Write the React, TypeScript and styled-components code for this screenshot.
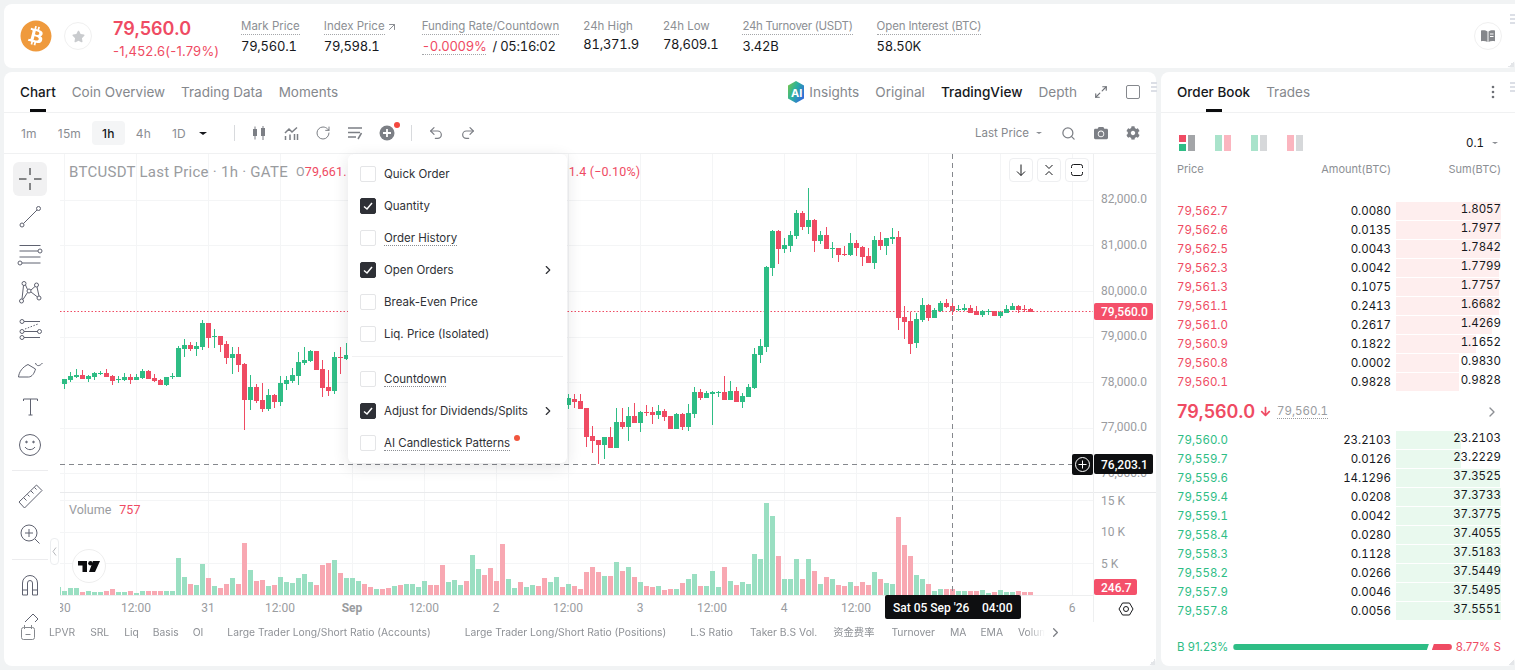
import React from 'react';
import styled, { createGlobalStyle } from 'styled-components';
import { FaBitcoin, FaStar, FaCamera, FaCog, FaArrowDown } from 'react-icons/fa';
import { ArrowUpRight, ChevronRight, Maximize2, Redo2, RotateCw, Search, Undo2 } from 'lucide-react';

const RED = '#ef4b63';
const GREEN = '#2ebd85';

// candles read off the picture: [up?, body top, body bottom, wick top, wick bottom], 3x px
type Candle = [number, number, number, number, number];

const LEFT_CANDLES: Candle[] = [
  [1, 672, 686, 672, 702], [1, 663, 676, 652, 682], [1, 659, 666, 643, 668], [0, 660, 671, 645, 671],
  [1, 663, 672, 660, 680], [1, 654, 666, 651, 674], [1, 653, 655, 648, 660], [0, 654, 665, 643, 665],
  [0, 662, 678, 660, 690], [1, 672, 674, 664, 684], [1, 666, 676, 655, 678], [0, 667, 676, 658, 686],
  [1, 666, 674, 658, 676], [1, 648, 670, 642, 672], [0, 648, 671, 645, 672], [0, 669, 679, 658, 682],
  [0, 675, 690, 672, 690], [1, 666, 690, 665, 692], [1, 663, 665, 655, 672], [1, 579, 666, 572, 666],
  [1, 570, 582, 552, 606], [0, 570, 582, 560, 588], [1, 573, 582, 560, 603], [1, 504, 576, 495, 585],
  [0, 504, 548, 504, 580], [1, 544, 545, 522, 580], [0, 544, 570, 544, 590], [0, 567, 609, 558, 627],
  [1, 597, 609, 575, 656], [0, 597, 630, 575, 650], [0, 627, 735, 625, 825], [1, 696, 735, 660, 765],
  [0, 696, 738, 686, 745], [0, 735, 762, 685, 770], [1, 720, 762, 702, 768], [0, 720, 741, 716, 760],
  [1, 684, 741, 664, 752], [1, 675, 687, 664, 705], [1, 660, 678, 640, 685], [1, 621, 663, 590, 690],
  [1, 615, 624, 576, 630], [1, 588, 618, 585, 620], [0, 588, 644, 588, 645], [0, 642, 699, 615, 725],
  [0, 696, 708, 645, 723], [1, 606, 708, 592, 716], [0, 606, 608, 575, 656], [1, 600, 612, 565, 615],
];

const MID_CANDLES: Candle[] = [
  [1, 745, 765, 732, 778], [0, 746, 755, 732, 775], [0, 752, 776, 732, 776], [0, 775, 860, 775, 890],
  [0, 858, 873, 828, 908], [0, 870, 885, 870, 942], [1, 860, 885, 860, 926], [0, 860, 893, 832, 893],
  [1, 816, 893, 775, 893], [0, 816, 832, 775, 836], [1, 798, 830, 770, 872], [0, 798, 818, 760, 818],
  [1, 786, 818, 782, 845], [0, 785, 788, 766, 798], [0, 785, 795, 772, 822], [1, 783, 795, 766, 808],
  [0, 783, 800, 778, 812], [0, 798, 836, 798, 836], [1, 792, 836, 790, 838], [0, 792, 830, 790, 840],
  [1, 790, 830, 762, 842], [1, 726, 792, 712, 805], [0, 726, 745, 718, 750], [1, 730, 745, 722, 745],
  [1, 726, 732, 722, 825], [1, 726, 728, 722, 740], [0, 726, 750, 678, 750], [1, 722, 750, 692, 750],
  [0, 722, 755, 712, 755], [1, 738, 755, 730, 773],
];

const RIGHT_CANDLES: Candle[] = [
  [1, 711, 740, 703, 742], [1, 612, 715, 595, 717], [1, 588, 614, 568, 638], [1, 350, 590, 348, 605],
  [1, 243, 354, 240, 378], [0, 243, 296, 240, 342], [1, 286, 296, 264, 308], [1, 255, 288, 243, 305],
  [1, 188, 258, 180, 268], [0, 188, 231, 183, 240], [1, 210, 231, 114, 252], [0, 210, 273, 207, 305],
  [1, 255, 273, 243, 282], [0, 255, 297, 232, 297], [1, 294, 296, 276, 324], [0, 294, 315, 294, 336],
  [0, 312, 315, 288, 318], [1, 279, 315, 250, 318], [0, 279, 294, 270, 318], [0, 291, 321, 288, 348],
  [0, 318, 339, 294, 340], [1, 270, 339, 258, 357], [0, 270, 288, 246, 300], [1, 264, 288, 264, 315],
  [1, 261, 267, 234, 282], [0, 261, 504, 243, 540], [0, 501, 516, 468, 567], [0, 513, 582, 486, 612],
  [1, 507, 579, 489, 594], [1, 465, 510, 444, 516], [0, 465, 504, 462, 513], [1, 480, 504, 474, 504],
  [1, 459, 484, 453, 486], [0, 459, 471, 447, 474], [0, 468, 483, 444, 495], [1, 477, 480, 465, 483],
  [1, 475, 480, 462, 483], [0, 475, 488, 465, 489], [0, 484, 495, 468, 495], [1, 484, 495, 480, 500],
  [1, 483, 485, 477, 495], [0, 483, 497, 483, 498], [1, 486, 498, 483, 503], [1, 477, 489, 465, 489],
  [1, 468, 480, 460, 480], [0, 468, 480, 465, 488], [0, 477, 480, 465, 486], [0, 477, 486, 474, 486],
];

// positive = green bar, negative = pink bar
const VOLUMES = [
  4, 7, 7, -3, 4, 3, 3, -4, -6, 3, 3, -4, 2, 4, -4, -4, -4, 4, 4, 37, 18, -11, 10, 31, -17, 9, -7, -11, 17, -11,
  -52, 25, -14, -15, 9, -10, 18, 13, 12, 17, 21, 13, -10, -30, -32, 35, -22, 17,
  17, 14, -11, -8, 6, -6, -7, 9, -10, 11, 11, 8, 14, -10, -10, -30, 13, 15, 10, -14, 40, 26, -20, -27, -14, -51, 16, 7,
  -13, 8, 10, -9, -17, 13, 18, -8, 11, -9, -6, -23, -28, -23, 19, -19, 33, -24, 28, -18, 13, -9, -8, 9, -5, -6, 6,
  -12, 16, 21, -9, 9, 24, 8, -28, 14, -10, 13, 11, 41, 36, 92, 79, -39, 16, 16, 36, -16, 36, -24, 11, -18, 16, -10,
  -9, 13, -9, -13, -10, 23, -16, 12, 11, -78, -50, -39, 20, 16, -11, 4, 6, -6, -6, 4, 4, -4, -4, 5, 2, -3, 5, 3, 3,
  -4, -3, -3,
];

const ASKS: [string, string, string, number][] = [
  ['79,562.7', '0.0080', '1.8057', 105], ['79,562.6', '0.0135', '1.7977', 105], ['79,562.5', '0.0043', '1.7842', 104],
  ['79,562.3', '0.0042', '1.7799', 103], ['79,561.3', '0.1075', '1.7757', 103], ['79,561.1', '0.2413', '1.6682', 103],
  ['79,561.0', '0.2617', '1.4269', 96], ['79,560.9', '0.1822', '1.1652', 80], ['79,560.8', '0.0002', '0.9830', 63],
  ['79,560.1', '0.9828', '0.9828', 63],
];

const BIDS: [string, string, string, number][] = [
  ['79,560.0', '23.2103', '23.2103', 65], ['79,559.7', '0.0126', '23.2229', 65], ['79,559.6', '14.1296', '37.3525', 104],
  ['79,559.4', '0.0208', '37.3733', 105], ['79,559.1', '0.0042', '37.3775', 105], ['79,558.4', '0.0280', '37.4055', 105],
  ['79,558.3', '0.1128', '37.5183', 105], ['79,558.2', '0.0266', '37.5449', 105], ['79,557.9', '0.0046', '37.5495', 105],
  ['79,557.8', '0.0056', '37.5551', 105],
];

const INDICATORS: [string, number][] = [
  ['LPVR', 0], ['SRL', 15], ['Liq', 15], ['Basis', 14], ['OI', 14],
  ['Large Trader Long/Short Ratio (Accounts)', 24], ['Large Trader Long/Short Ratio (Positions)', 34],
  ['L.S Ratio', 24], ['Taker B.S Vol.', 17], ['资金费率', 16], ['Turnover', 17], ['MA', 15], ['EMA', 14], ['Volume', 15],
];

const MENU_TOP: [string, boolean, boolean, boolean][] = [
  ['Quick Order', false, false, false],
  ['Quantity', true, false, false],
  ['Order History', false, true, false],
  ['Open Orders', true, false, true],
  ['Break-Even Price', false, false, false],
  ['Liq. Price (Isolated)', false, false, false],
];

const GlobalStyle = createGlobalStyle`
  html, body { margin: 0; padding: 0; background: #f1f3f4; }
  body { font-family: Inter, "Noto Sans CJK SC", sans-serif; overflow: hidden; }
  * { box-sizing: border-box; }
`;

const Page = styled.div`
  width: 1515px;
  height: 670px;
  padding: 4px 0 4px 4px;
  display: flex;
  flex-direction: column;
  gap: 4px;
`;

const Card = styled.section`
  position: relative;
  background: #fff;
  border-radius: 8px;
`;

const TopCard = styled(Card)`
  height: 64px;
  border-radius: 8px 0 8px 8px;
  display: flex;
  align-items: center;
  padding: 0 13px 0 16px;
`;

const CoinBadge = styled.div`
  width: 32px;
  height: 32px;
  color: #ef9a3d;
  display: flex;
`;

const RoundButton = styled.div`
  width: 28px;
  height: 28px;
  border-radius: 50%;
  border: 1px solid #f0f0f0;
  display: flex;
  align-items: center;
  justify-content: center;
  color: #c9cbce;
`;

const StarButton = styled(RoundButton)`
  margin-left: 12px;
`;

const BookButton = styled(RoundButton)`
  margin-left: auto;
  color: #85878b;
`;

const PriceBlock = styled.div`
  width: 128px;
  margin-left: 21px;
  padding-top: 5px;
  color: ${RED};
`;

const BigPrice = styled.div`
  font-size: 18px;
  font-weight: 600;
  line-height: 24px;
`;

const PriceChange = styled.div`
  font-size: 13px;
  letter-spacing: 0.2px;
  line-height: 20px;
  white-space: nowrap;
`;

const Stats = styled.div`
  display: flex;
  gap: 24px;
  padding-top: 2px;
`;

const Stat = styled.div`
  display: flex;
  flex-direction: column;
  align-items: flex-start;
`;

const StatLabel = styled.div<{ $track?: number }>`
  display: flex;
  align-items: center;
  gap: 1px;
  font-size: 11.5px;
  letter-spacing: ${(p) => p.$track ?? 0}px;
  line-height: 14px;
  color: #8c8f94;
`;

const Dotted = styled.span`
  border-bottom: 1px dotted #a4a6a9;
  padding-bottom: 1px;
`;

const StatValue = styled.div`
  font-size: 13px;
  letter-spacing: -0.25px;
  line-height: 17px;
  margin-top: 3px;
  color: #16181c;
  white-space: nowrap;
  font-variant-numeric: tabular-nums;
`;

const RedValue = styled.span`
  color: ${RED};
  border-bottom: 1px dotted #a4a6a9;
  margin-right: 6px;
`;

const Grip = styled.i`
  position: absolute;
  top: 10px;
  right: -1px;
  width: 6px;
  height: 10px;
  background: repeating-linear-gradient(#dcdfe6 0 2px, transparent 2px 4px);
`;

const Corner = styled.i`
  position: absolute;
  right: 1px;
  bottom: 1px;
  width: 6px;
  height: 6px;
  background: linear-gradient(135deg, transparent 50%, #e4e6e9 50%);
`;

const Main = styled.div`
  flex: 1;
  display: flex;
  gap: 5px;
`;

const ChartCard = styled(Card)`
  width: 1152px;
  flex: none;
  display: flex;
  flex-direction: column;
`;

const BookCard = styled(Card)`
  flex: 1;
  min-width: 0;
  border-radius: 8px 0 8px 8px;
  display: flex;
  flex-direction: column;
`;

const TabBar = styled.div`
  height: 41px;
  flex: none;
  display: flex;
  align-items: center;
  gap: 16px;
  padding: 0 16px;
  border-bottom: 1px solid #f0f1f2;
`;

const Tab = styled.div<{ $active?: boolean }>`
  position: relative;
  font-size: 13.5px;
  line-height: 40px;
  color: ${(p) => (p.$active ? '#16181c' : '#85888d')};
  font-weight: ${(p) => (p.$active ? 500 : 400)};
  ${(p) =>
    p.$active &&
    `&::after {
      content: '';
      position: absolute;
      left: 50%;
      bottom: 0;
      width: 16px;
      height: 3px;
      margin-left: -8px;
      background: #0b0c0e;
    }`}
`;

const Spacer = styled.div`
  flex: 1;
`;

const ViewTab = styled.div<{ $active?: boolean }>`
  font-size: 13.6px;
  color: ${(p) => (p.$active ? '#16181c' : '#85888d')};
  font-weight: ${(p) => (p.$active ? 500 : 400)};
`;

const InsightsTab = styled(ViewTab)`
  display: flex;
  align-items: center;
  gap: 4px;
`;

const TabIcons = styled.div`
  display: flex;
  align-items: center;
  gap: 18px;
  margin-left: 1px;
  color: #6e7177;
`;

const SquareIcon = styled.i`
  width: 14px;
  height: 14px;
  border: 1.5px solid #85888d;
  border-radius: 2px;
`;

const DotsIcon = styled.svg`
  margin-right: 4px;
`;

const Toolbar = styled.div`
  height: 41px;
  flex: none;
  display: flex;
  align-items: center;
  padding: 0 16px 0 7px;
  border-bottom: 1px solid #f0f1f2;
  color: #7c7f85;
`;

const Intervals = styled.div`
  display: flex;
  gap: 1px;
`;

const Interval = styled.div<{ $active?: boolean }>`
  height: 24px;
  padding: 0 10px;
  border-radius: 4px;
  display: flex;
  align-items: center;
  font-size: 12px;
  letter-spacing: 0.2px;
  font-weight: ${(p) => (p.$active ? 500 : 400)};
  color: ${(p) => (p.$active ? '#16181c' : '#8a8d92')};
  background: ${(p) => (p.$active ? '#f4f5f6' : 'transparent')};
`;

const Caret = styled.i<{ $size?: number; $color?: string }>`
  width: 0;
  height: 0;
  border-left: ${(p) => p.$size ?? 3}px solid transparent;
  border-right: ${(p) => p.$size ?? 3}px solid transparent;
  border-top: ${(p) => (p.$size ?? 3) - 0.5}px solid ${(p) => p.$color ?? '#8a8d92'};
`;

const BlackCaret = styled(Caret)`
  margin-left: 3px;
  margin-right: 27px;
`;

const ToolDivider = styled.i`
  width: 1px;
  height: 16px;
  background: #d8dadd;
`;

const ToolIcons = styled.div`
  display: flex;
  align-items: center;
  gap: 16px;
  margin: 0 16px;
`;

const UndoIcons = styled.div`
  display: flex;
  align-items: center;
  gap: 16px;
  margin-left: 16px;
`;

const PriceSelect = styled.div`
  display: flex;
  align-items: center;
  gap: 7px;
  font-size: 11.5px;
  color: #85888d;
  margin-right: 19px;
`;

const RightIcons = styled.div`
  display: flex;
  align-items: center;
  gap: 18px;
`;

const NewDot = styled.span`
  position: relative;
  display: flex;
  &::after {
    content: '';
    position: absolute;
    top: -3px;
    right: -5px;
    width: 6px;
    height: 6px;
    border-radius: 50%;
    background: #f4483f;
  }
`;

const ChartBody = styled.div`
  position: relative;
  height: 468px;
  flex: none;
  display: flex;
`;

const ToolRail = styled.div`
  width: 56px;
  height: 468px;
  flex: none;
  overflow: hidden;
  padding: 8px 4px 0 0;
  display: flex;
  flex-direction: column;
  align-items: center;
`;

const ToolButton = styled.div<{ $active?: boolean }>`
  width: 34px;
  height: 34px;
  flex: none;
  margin-bottom: 4px;
  border-radius: 6px;
  display: flex;
  align-items: center;
  justify-content: center;
  background: ${(p) => (p.$active ? '#f1f1f2' : 'transparent')};
  color: #5f6270;
`;

const RailDivider = styled.i`
  width: 36px;
  height: 1px;
  flex: none;
  margin: 4px 0 8px;
  background: #ececee;
`;

const CollapseHandle = styled.div`
  position: absolute;
  left: 46px;
  top: 384px;
  width: 9px;
  height: 27px;
  border: 1px solid #eceef0;
  border-radius: 4px;
  background: #fff;
  color: #b5b7bb;
  display: flex;
  align-items: center;
  justify-content: center;
`;

const ChartSvg = styled.svg`
  display: block;
  flex: none;
  font-family: Roboto, "Liberation Sans", sans-serif;
`;

const Legend = styled.div`
  position: absolute;
  left: 65px;
  top: 9px;
  display: flex;
  align-items: center;
  font-family: Roboto, "Liberation Sans", sans-serif;
  font-size: 15px;
  letter-spacing: 0.27px;
  line-height: 18px;
  color: #9a9c9f;
  white-space: nowrap;
`;

const LegendValue = styled.span<{ $gap: number; $muted?: boolean }>`
  font-size: 12.5px;
  letter-spacing: 0.15px;
  margin-left: ${(p) => p.$gap}px;
  color: ${(p) => (p.$muted ? '#9a9c9f' : RED)};
`;

const PaneButtons = styled.div`
  position: absolute;
  left: 1005px;
  top: 4px;
  display: flex;
  gap: 4px;
`;

const PaneButton = styled.div`
  width: 24px;
  height: 24px;
  border: 1px solid #eeeff1;
  border-radius: 4px;
  background: #fff;
  display: flex;
  align-items: center;
  justify-content: center;
  color: #17181b;
`;

const TvBadge = styled.div`
  position: absolute;
  left: 68px;
  top: 395px;
  width: 34px;
  height: 34px;
  border-radius: 50%;
  border: 1px solid #eee;
  background: #fff;
  display: flex;
  align-items: center;
  justify-content: center;
`;

const Menu = styled.div`
  position: absolute;
  left: 344px;
  top: 0;
  width: 219px;
  height: 309px;
  padding: 4px 0;
  background: #fff;
  border-radius: 6px;
  box-shadow: 0 4px 16px rgba(30, 34, 45, 0.12);
`;

const MenuRow = styled.div`
  height: 32px;
  display: flex;
  align-items: center;
  gap: 8px;
  padding: 0 12px;
  font-size: 11.5px;
  color: #2f3136;
`;

const Check = styled.span<{ $on: boolean }>`
  width: 16px;
  height: 16px;
  flex: none;
  border-radius: 2px;
  border: 1px solid ${(p) => (p.$on ? '#2e3036' : '#e4e5e7')};
  background: ${(p) => (p.$on ? '#2e3036' : '#fff')};
  display: flex;
  align-items: center;
  justify-content: center;
`;

const MenuLabel = styled.span<{ $dotted?: boolean }>`
  ${(p) => p.$dotted && 'border-bottom: 1px dotted #8a8d92;'}
`;

const MenuArrow = styled.span`
  margin-left: auto;
  display: flex;
  color: #2f3136;
`;

const MenuDot = styled.i`
  align-self: flex-start;
  margin: 8px 0 0 -4px;
  width: 6px;
  height: 6px;
  border-radius: 50%;
  background: #f1553d;
`;

const MenuDivider = styled.div`
  height: 1px;
  margin: 6px 4px 6px;
  background: #f1f1f2;
`;

const IndicatorBar = styled.div`
  height: 20px;
  display: flex;
  align-items: center;
  padding-left: 17px;
  gap: 14px;
`;

const IndicatorList = styled.div`
  width: 997px;
  display: flex;
  overflow: hidden;
  white-space: nowrap;
  font-size: 10.3px;
  line-height: 18px;
  color: #8e9196;
  -webkit-mask-image: linear-gradient(90deg, #000 978px, transparent 996px);
  mask-image: linear-gradient(90deg, #000 978px, transparent 996px);
`;

const Indicator = styled.span<{ $gap: number }>`
  flex: none;
  margin-left: ${(p) => p.$gap}px;
`;

const ScrollArrow = styled.span`
  display: flex;
  margin-left: -12px;
  color: #7c7f85;
`;

const BookTools = styled.div`
  height: 32px;
  margin-top: 14px;
  padding: 0 17px 0 18px;
  display: flex;
  align-items: center;
  gap: 20px;
`;

const LayoutIcon = styled.div`
  display: grid;
  grid-template-columns: 7px 7px;
  grid-template-rows: 7px 7px;
  gap: 2px;
  width: 16px;
  height: 16px;
`;

const Piece = styled.i<{ $color: string; $tall?: boolean }>`
  background: ${(p) => p.$color};
  ${(p) => p.$tall && 'grid-row: span 2;'}
`;

const TickSelect = styled.div`
  margin-left: auto;
  display: flex;
  align-items: center;
  gap: 8px;
  font-size: 11.5px;
  font-variant-numeric: tabular-nums;
  color: #16181c;
`;

const BookColumns = styled.div`
  display: flex;
  padding: 0 14px 0 16px;
  margin-top: 1px;
  height: 18px;
  align-items: center;
  font-size: 11px;
  color: #8c8f94;
`;

const ColPrice = styled.div`
  width: 100px;
`;

const ColAmount = styled.div`
  width: 114px;
  text-align: right;
`;

const ColSum = styled.div`
  flex: 1;
  text-align: right;
`;

const RowList = styled.div<{ $top: number }>`
  margin-top: ${(p) => p.$top}px;
  padding: 0 14px 0 16px;
`;

const BookRow = styled.div`
  height: 19px;
  display: flex;
  align-items: center;
  font-size: 11.5px;
  font-variant-numeric: tabular-nums;
  color: #16181c;
`;

const RowPrice = styled.div<{ color: string }>`
  width: 100px;
  color: ${(p) => p.color};
`;

const RowAmount = styled.div`
  width: 114px;
  text-align: right;
`;

const SumCell = styled.div`
  position: relative;
  margin-left: 5px;
  width: 105px;
  height: 18px;
  text-align: right;
  line-height: 15px;
`;

const DepthBar = styled.i<{ color: string }>`
  position: absolute;
  left: 0;
  top: 0;
  bottom: 0;
  background: ${(p) => p.color};
`;

const SumText = styled.span`
  position: relative;
`;

const MidPrice = styled.div`
  height: 39px;
  padding: 2px 15px 0 16px;
  display: flex;
  align-items: center;
  color: ${RED};
`;

const MidValue = styled.span`
  font-size: 18px;
  font-weight: 600;
`;

const MidArrow = styled.span`
  display: flex;
  margin: 0 6px 0 5px;
`;

const MidMark = styled.span`
  font-size: 11.5px;
  font-variant-numeric: tabular-nums;
  color: #9a9c9f;
  border-bottom: 1px dotted #9a9c9f;
`;

const MidNext = styled.span`
  display: flex;
  margin-left: auto;
  color: #8c8f94;
`;

const Balance = styled.div`
  margin-top: 20px;
  padding: 0 14px 0 16px;
  display: flex;
  align-items: center;
  font-size: 11.5px;
`;

const BalanceText = styled.span<{ color: string }>`
  color: ${(p) => p.color};
  white-space: nowrap;
`;

const BalanceBuy = styled.i`
  flex: 1;
  min-width: 0;
  height: 6px;
  margin: 0 3px 0 5px;
  border-radius: 3px 0 0 3px;
  background: ${GREEN};
  clip-path: polygon(0 0, 100% 0, calc(100% - 2px) 100%, 0 100%);
`;

const BalanceSell = styled.i`
  flex: none;
  width: 20px;
  height: 6px;
  margin-right: 4px;
  border-radius: 0 3px 3px 0;
  background: ${RED};
  clip-path: polygon(2px 0, 100% 0, 100% 100%, 0 100%);
`;

const VolumeLabel = styled.div`
  position: absolute;
  left: 65px;
  top: 347px;
  display: flex;
  gap: 8px;
  font-family: Roboto, "Liberation Sans", sans-serif;
  font-size: 12.5px;
  line-height: 18px;
  color: #9a9c9f;
`;

const VolumeValue = styled.span`
  color: ${RED};
`;

function Icon({ children, size = 28 }: { children: React.ReactNode; size?: number }) {
  return (
    <svg width={size} height={size} viewBox="0 0 28 28" fill="none" stroke="currentColor" strokeWidth="1">
      {children}
    </svg>
  );
}

const railIcons = [
  <Icon key="cross">
    <path d="M3 14h7.500M18 14h7.500M14 3v7M14 18v7" stroke="#17181b" />
  </Icon>,
  <Icon key="line">
    <circle cx="6" cy="22" r="2" />
    <circle cx="22.500" cy="5.500" r="2" />
    <path d="M7.500 20.500 21 7" />
  </Icon>,
  <Icon key="lines">
    <path d="M3.500 4.500h21M3.500 10h18.500M3.500 16h21M6 22h18.500" />
    <circle cx="24" cy="10" r="2" />
    <circle cx="4" cy="22" r="2" />
  </Icon>,
  <Icon key="pattern">
    <circle cx="8" cy="4.500" r="2" />
    <circle cx="20.500" cy="6" r="2" />
    <circle cx="13" cy="12" r="2" />
    <circle cx="5.500" cy="22" r="2" />
    <circle cx="23" cy="19" r="2" />
    <path d="M7.500 6.500 6 20M9.500 6 11.500 10.500M15 11 19 7.500M21 8 23 17M11.500 13.500 7 20.500M15 13 21.500 18" />
  </Icon>,
  <Icon key="pitch">
    <circle cx="6" cy="4.500" r="2" />
    <circle cx="6" cy="14.500" r="2" />
    <circle cx="23.500" cy="14.500" r="2" />
    <circle cx="6" cy="20.500" r="2" />
    <path d="M8 4.500h16M8 14.500h14M8 20.500h16" />
    <path d="M9 12 22 7" strokeDasharray="1.500 1.500" />
  </Icon>,
  <Icon key="brush">
    <path d="M2.500 22c.5-5 4-10 9.500-12.500l7.500 4.500c-1 4-3.500 8-7 8z" />
    <path d="M19.500 8c1 3.500 4 3.500 7 0" />
  </Icon>,
  <Icon key="text">
    <path d="M7.500 6h14M7.500 6v2M21.500 6v2M14.500 6v16M12.500 22h4" />
  </Icon>,
  <Icon key="smile">
    <circle cx="14" cy="14" r="10.500" />
    <circle cx="10.500" cy="11" r=".8" fill="currentColor" />
    <circle cx="17.500" cy="11" r=".8" fill="currentColor" />
    <path d="M9 16c2.500 3.500 7.500 3.500 10 0" />
  </Icon>,
];

const railIconsBottom = [
  <Icon key="ruler">
    <path d="M3 20 20.500 3 26 8.500 8.500 26 3 20ZM8 16l2.500 2.500M11.500 12.500l2 2M15 9l2.500 2.500M18.500 5.500l2 2" />
  </Icon>,
  <Icon key="zoom">
    <circle cx="13" cy="13" r="8" />
    <path d="M13 9v8M9 13h8M19 19l4.500 4.500" />
  </Icon>,
];

function CandleIcon() {
  return (
    <svg width="16" height="16" viewBox="0 0 16 16" fill="currentColor">
      <path d="M2 4h4v7H2zM3.500 1.500h1v13h-1zM10 3h4v8h-4zM11.500 1h1v14h-1z" />
    </svg>
  );
}

function BarsIcon() {
  return (
    <svg width="16" height="16" viewBox="0 0 16 16" fill="none" stroke="currentColor" strokeWidth="1.500">
      <path d="M2 8 6 4l3 3 5-4.500M2.500 11v4M7 9.500V15M11.500 9v6M14.500 9v6" />
    </svg>
  );
}

function ListPenIcon() {
  return (
    <svg width="16" height="16" viewBox="0 0 16 16" fill="none" stroke="currentColor" strokeWidth="1.500">
      <path d="M1 3h14M1 7.500h12M1 12h8M14.500 8 11 14" />
    </svg>
  );
}

function PlusDiscIcon() {
  return (
    <svg width="16" height="16" viewBox="0 0 16 16">
      <circle cx="8" cy="8" r="7.500" fill="#7c7f85" />
      <path d="M8 4v8M4 8h8" stroke="#fff" strokeWidth="1.800" />
    </svg>
  );
}

function BookIcon() {
  return (
    <svg width="14" height="14" viewBox="0 0 14 14" fill="currentColor">
      <path d="M0 1.500c2.500-.5 4.800-.3 6.500 1V13C4.800 12 2.500 11.800 0 12.300V1.500ZM14 1.500v10.800c-2.500-.5-4.800-.3-6.500.7V2.500c1.700-1.300 4-1.500 6.500-1Z" />
      <path d="M9 5h3.500M9 7.500h3.500" stroke="#fff" strokeWidth="1" />
    </svg>
  );
}

function AiLogo() {
  return (
    <svg width="18" height="22" viewBox="0 0 18 22">
      <defs>
        <linearGradient id="ai-logo" x1="0" y1="0" x2="1" y2="0.600">
          <stop offset="0" stopColor="#7ac943" />
          <stop offset="0.500" stopColor="#2bb0a0" />
          <stop offset="1" stopColor="#2f6fd8" />
        </linearGradient>
      </defs>
      <path d="M9 0 17 4.500v13L9 22l-8-4.500v-13z" fill="url(#ai-logo)" />
      <text x="4" y="15.500" fontSize="11" fontWeight="700" fill="#fff" fontFamily="Inter, sans-serif">
        AI
      </text>
    </svg>
  );
}

function TvLogo() {
  return (
    <svg width="22" height="11" viewBox="0 0 22 11" fill="#0c0d0f">
      <path d="M0 0h9v11H4.500V4.500H0zM15 0h7l-5 11h-6z" />
      <circle cx="12.500" cy="2.300" r="2.300" />
    </svg>
  );
}

function CheckMark() {
  return (
    <svg width="12" height="12" viewBox="0 0 12 12" fill="none" stroke="#fff" strokeWidth="1.500">
      <path d="M2 6.500 5 9l5-6" />
    </svg>
  );
}

function candleRects(list: Candle[], startX: number, offsetY: number) {
  return list.map(([up, top, bottom, hi, lo], i) => {
    const x = startX + i * 6;
    const y = (v: number) => Math.round(offsetY + v / 3);
    const color = up ? GREEN : RED;
    return (
      <g key={x} fill={color}>
        <rect x={x} y={y(hi)} width={1} height={y(lo) - y(hi)} />
        <rect x={x - 2} y={y(top)} width={5} height={Math.max(1, y(bottom) - y(top))} />
      </g>
    );
  });
}

const GRID_X = [64, 136, 208, 280, 352, 424, 496, 568, 640, 712, 784, 856, 928, 1000, 1072];
const GRID_Y = [200, 245, 291, 337, 382, 428, 473, 500, 532, 563];
const PRICES: [string, number][] = [
  ['82,000.0', 198], ['81,000.0', 244], ['80,000.0', 290], ['79,000.0', 335], ['78,000.0', 381], ['77,000.0', 426], ['76,000.0', 472],
];
const VOLUME_TICKS: [string, number][] = [['15 K', 500], ['10 K', 531], ['5 K', 563]];
const TIMES: [string, number][] = [
  ['30', 64], ['12:00', 136], ['31', 208], ['12:00', 280], ['Sep', 352], ['12:00', 424], ['2', 496],
  ['12:00', 568], ['3', 640], ['12:00', 712], ['4', 784], ['12:00', 856], ['6', 1072],
];

function Chart() {
  return (
    <ChartSvg width="1096" height="468" viewBox="60 154 1096 468">
      {GRID_X.map((x) => (
        <rect key={x} x={x} y={154} width={1} height={441} fill="#f4f5f6" />
      ))}
      {GRID_Y.map((y) => (
        <rect key={y} x={60} y={y} width={1033} height={1} fill="#f4f5f6" />
      ))}
      <rect x={60} y={492} width={1096} height={1} fill="#e9eaec" />
      <rect x={60} y={595} width={1033} height={1} fill="#eeeff0" />
      <rect x={1093} y={154} width={1} height={469} fill="#eeeff0" />

      {VOLUMES.map((v, i) => (
        <rect key={i} x={62 + i * 6} y={595 - Math.abs(v)} width={5} height={Math.abs(v)} fill={v > 0 ? '#9adfc2' : '#f8a8b2'} />
      ))}
      <rect x={56} y={587} width={5} height={8} fill="#9adfc2" />

      <path d="M60 311.500H1093" stroke="#ef4b63" strokeDasharray="1.500 2" />
      {candleRects(LEFT_CANDLES, 64, 155)}
      {candleRects(MID_CANDLES, 568, 150)}
      {candleRects(RIGHT_CANDLES, 748, 150)}

      <path d="M952.500 154V595" stroke="#85888d" strokeDasharray="5 4" />
      <path d="M60 464.500H1072" stroke="#85888d" strokeDasharray="5 4" />

      {PRICES.map(([label, y]) => (
        <text key={label} x={1101} y={y + 4.500} fontSize="12" fill="#9a9c9f">
          {label}
        </text>
      ))}
      {VOLUME_TICKS.map(([label, y]) => (
        <text key={label} x={1101} y={y + 4.500} fontSize="12" fill="#9a9c9f">
          {label}
        </text>
      ))}
      {TIMES.map(([label, x]) => (
        <text
          key={`${label}${x}`}
          x={x}
          y={612}
          fontSize="12"
          textAnchor="middle"
          fontWeight={label === 'Sep' ? 700 : 400}
          fill="#9a9c9f"
        >
          {label}
        </text>
      ))}

      <rect x={1094} y={303} width={59} height={17} rx={2} fill="#f4506a" />
      <text x={1101} y={316} fontSize="12" fontWeight="500" fill="#fff">
        79,560.0
      </text>

      <rect x={1072} y={454} width={21} height={21} rx={2} fill="#0e0f11" />
      <circle cx={1082.500} cy={464.500} r={7} fill="none" stroke="#fff" />
      <path d="M1082.500 460.500v8M1078.500 464.500h8" stroke="#fff" />
      <rect x={1094} y={454} width={59} height={20} rx={2} fill="#0e0f11" />
      <text x={1101} y={468.500} fontSize="12" fontWeight="500" fill="#fff">
        76,203.1
      </text>

      <rect x={1094} y={579} width={43} height={16} rx={2} fill="#f4506a" />
      <text x={1101} y={591.500} fontSize="12" fontWeight="500" fill="#fff">
        246.7
      </text>

      <rect x={885} y={595} width={136} height={24} rx={2} fill="#0e0f11" />
      <text y={611.500} fontSize="12" fontWeight="500" fill="#fff">
        <tspan x={893}>Sat 05 Sep '26</tspan>
        <tspan x={982}>04:00</tspan>
      </text>

      <path d="M1119 609l3.500-6h7l3.500 6-3.500 6h-7z" fill="none" stroke="#17181b" />
      <circle cx={1126} cy={609} r={2.500} fill="none" stroke="#17181b" />
    </ChartSvg>
  );
}

export default function App() {
  return (
    <>
      <GlobalStyle />
      <Page>
        <TopCard>
          <CoinBadge>
            <FaBitcoin size={32} />
          </CoinBadge>
          <StarButton>
            <FaStar size={13} />
          </StarButton>
          <PriceBlock>
            <BigPrice>79,560.0</BigPrice>
            <PriceChange>-1,452.6(-1.79%)</PriceChange>
          </PriceBlock>
          <Stats>
            <Stat>
              <StatLabel>
                <Dotted>Mark Price</Dotted>
              </StatLabel>
              <StatValue>79,560.1</StatValue>
            </Stat>
            <Stat>
              <StatLabel>
                <Dotted>Index Price</Dotted>
                <ArrowUpRight size={12} />
              </StatLabel>
              <StatValue>79,598.1</StatValue>
            </Stat>
            <Stat>
              <StatLabel>
                <Dotted>Funding Rate/Countdown</Dotted>
              </StatLabel>
              <StatValue>
                <RedValue>-0.0009%</RedValue>/ 05:16:02
              </StatValue>
            </Stat>
            <Stat>
              <StatLabel>24h High</StatLabel>
              <StatValue>81,371.9</StatValue>
            </Stat>
            <Stat>
              <StatLabel>24h Low</StatLabel>
              <StatValue>78,609.1</StatValue>
            </Stat>
            <Stat>
              <StatLabel $track={-0.3}>
                <Dotted>24h Turnover (USDT)</Dotted>
              </StatLabel>
              <StatValue>3.42B</StatValue>
            </Stat>
            <Stat>
              <StatLabel $track={-0.15}>
                <Dotted>Open Interest (BTC)</Dotted>
              </StatLabel>
              <StatValue>58.50K</StatValue>
            </Stat>
          </Stats>
          <BookButton>
            <BookIcon />
          </BookButton>
          <Grip />
          <Corner />
        </TopCard>
        <Main>
          <ChartCard>
            <TabBar>
              <Tab $active>Chart</Tab>
              <Tab>Coin Overview</Tab>
              <Tab>Trading Data</Tab>
              <Tab>Moments</Tab>
              <Spacer />
              <InsightsTab>
                <AiLogo />
                Insights
              </InsightsTab>
              <ViewTab>Original</ViewTab>
              <ViewTab $active>TradingView</ViewTab>
              <ViewTab>Depth</ViewTab>
              <TabIcons>
                <Maximize2 size={14} />
                <SquareIcon />
              </TabIcons>
            </TabBar>
            <Toolbar>
              <Intervals>
                <Interval>1m</Interval>
                <Interval>15m</Interval>
                <Interval $active>1h</Interval>
                <Interval>4h</Interval>
                <Interval>1D</Interval>
              </Intervals>
              <BlackCaret $size={4} $color="#16181c" />
              <ToolDivider />
              <ToolIcons>
                <CandleIcon />
                <BarsIcon />
                <RotateCw size={16} strokeWidth={1.500} />
                <ListPenIcon />
                <NewDot>
                  <PlusDiscIcon />
                </NewDot>
              </ToolIcons>
              <ToolDivider />
              <UndoIcons>
                <Undo2 size={16} strokeWidth={1.800} />
                <Redo2 size={16} strokeWidth={1.800} />
              </UndoIcons>
              <Spacer />
              <PriceSelect>
                Last Price
                <Caret />
              </PriceSelect>
              <RightIcons>
                <Search size={15} strokeWidth={2} />
                <FaCamera size={14} />
                <FaCog size={14} />
              </RightIcons>
            </Toolbar>
            <ChartBody>
              <ToolRail>
                {railIcons.map((icon, i) => (
                  <ToolButton key={i} $active={i === 0}>
                    {icon}
                  </ToolButton>
                ))}
                <RailDivider />
                {railIconsBottom.map((icon, i) => (
                  <ToolButton key={i}>{icon}</ToolButton>
                ))}
                <RailDivider />
                <ToolButton>
                  <Icon>
                    <path d="M6.500 24V12a7.500 7.500 0 0 1 15 0v12h-5V12a2.500 2.500 0 0 0-5 0v12zM6.500 19h5M16.500 19h5" />
                  </Icon>
                </ToolButton>
                <ToolButton>
                  <Icon>
                    <path d="M4 18 17 5l5 5L9 23H4zM3 26h22" />
                  </Icon>
                </ToolButton>
              </ToolRail>
              <Chart />
              <CollapseHandle>
                <svg width="5" height="9" viewBox="0 0 5 9" fill="none" stroke="currentColor">
                  <path d="M4 .5 1 4.500l3 4" />
                </svg>
              </CollapseHandle>
              <Legend>
                BTCUSDT Last Price · 1h · GATE
                <LegendValue $gap={8} $muted>
                  O
                </LegendValue>
                <LegendValue $gap={0}>79,661.</LegendValue>
                <LegendValue $gap={222}>1.4 (−0.10%)</LegendValue>
              </Legend>
              <PaneButtons>
                <PaneButton>
                  <svg width="14" height="14" viewBox="0 0 14 14" fill="none" stroke="currentColor">
                    <path d="M7 1.500v11M3 8.500l4 4 4-4" />
                  </svg>
                </PaneButton>
                <PaneButton>
                  <svg width="14" height="14" viewBox="0 0 14 14" fill="none" stroke="currentColor">
                    <path d="M3.500 2 7 5.500 10.500 2M3.500 12 7 8.500l3.500 3.500" />
                  </svg>
                </PaneButton>
                <PaneButton>
                  <svg width="14" height="14" viewBox="0 0 14 14" fill="none" stroke="currentColor">
                    <path d="M1.500 5V3.500a2 2 0 0 1 2-2h7a2 2 0 0 1 2 2V5M12.500 9v1.500a2 2 0 0 1-2 2h-7a2 2 0 0 1-2-2V9" />
                  </svg>
                </PaneButton>
              </PaneButtons>
              <VolumeLabel>
                Volume
                <VolumeValue>757</VolumeValue>
              </VolumeLabel>
              <TvBadge>
                <TvLogo />
              </TvBadge>
              <Menu>
                {MENU_TOP.map(([label, on, dotted, arrow]) => (
                  <MenuRow key={label}>
                    <Check $on={on}>{on && <CheckMark />}</Check>
                    <MenuLabel $dotted={dotted}>{label}</MenuLabel>
                    {arrow && (
                      <MenuArrow>
                        <ChevronRight size={14} strokeWidth={2} />
                      </MenuArrow>
                    )}
                  </MenuRow>
                ))}
                <MenuDivider />
                <MenuRow>
                  <Check $on={false} />
                  <MenuLabel $dotted>Countdown</MenuLabel>
                </MenuRow>
                <MenuRow>
                  <Check $on>
                    <CheckMark />
                  </Check>
                  <MenuLabel>Adjust for Dividends/Splits</MenuLabel>
                  <MenuArrow>
                    <ChevronRight size={14} strokeWidth={2} />
                  </MenuArrow>
                </MenuRow>
                <MenuRow>
                  <Check $on={false} />
                  <MenuLabel $dotted>AI Candlestick Patterns</MenuLabel>
                  <MenuDot />
                </MenuRow>
              </Menu>
            </ChartBody>
            <IndicatorBar>
              <svg width="14" height="15" viewBox="0 0 14 15" fill="none" stroke="#85888d">
                <rect x=".5" y="2.500" width="13" height="12" rx="2" />
                <path d="M3.500 0v4M10.500 0v4M4.500 9.500h5" />
              </svg>
              <IndicatorList>
                {INDICATORS.map(([label, gap]) => (
                  <Indicator key={label} $gap={gap}>
                    {label}
                  </Indicator>
                ))}
              </IndicatorList>
              <ScrollArrow>
                <ChevronRight size={15} />
              </ScrollArrow>
            </IndicatorBar>
            <Grip />
            <Corner />
          </ChartCard>
          <BookCard>
            <TabBar>
              <Tab $active>Order Book</Tab>
              <Tab>Trades</Tab>
              <Spacer />
              <DotsIcon width="4" height="14" viewBox="0 0 4 14" fill="#6e7177">
                <circle cx="2" cy="2" r="1.300" />
                <circle cx="2" cy="7" r="1.300" />
                <circle cx="2" cy="12" r="1.300" />
              </DotsIcon>
            </TabBar>
            <BookTools>
              <LayoutIcon>
                <Piece $color={RED} />
                <Piece $color="#a3a5a8" $tall />
                <Piece $color={GREEN} />
              </LayoutIcon>
              <LayoutIcon>
                <Piece $color="#a9e3cb" $tall />
                <Piece $color="#fbb5bf" $tall />
              </LayoutIcon>
              <LayoutIcon>
                <Piece $color="#a9e3cb" $tall />
                <Piece $color="#d6d8da" $tall />
              </LayoutIcon>
              <LayoutIcon>
                <Piece $color="#fbb5bf" $tall />
                <Piece $color="#d6d8da" $tall />
              </LayoutIcon>
              <TickSelect>
                0.1
                <Caret />
              </TickSelect>
            </BookTools>
            <BookColumns>
              <ColPrice>Price</ColPrice>
              <ColAmount>Amount(BTC)</ColAmount>
              <ColSum>Sum(BTC)</ColSum>
            </BookColumns>
            <RowList $top={23}>
              {ASKS.map(([price, amount, sum, width]) => (
                <BookRow key={price}>
                  <RowPrice color={RED}>{price}</RowPrice>
                  <RowAmount>{amount}</RowAmount>
                  <SumCell>
                    <DepthBar color="#feeeee" style={{ width }} />
                    <SumText>{sum}</SumText>
                  </SumCell>
                </BookRow>
              ))}
            </RowList>
            <MidPrice>
              <MidValue>79,560.0</MidValue>
              <MidArrow>
                <FaArrowDown size={11} />
              </MidArrow>
              <MidMark>79,560.1</MidMark>
              <MidNext>
                <ChevronRight size={16} />
              </MidNext>
            </MidPrice>
            <RowList $top={0}>
              {BIDS.map(([price, amount, sum, width]) => (
                <BookRow key={price}>
                  <RowPrice color={GREEN}>{price}</RowPrice>
                  <RowAmount>{amount}</RowAmount>
                  <SumCell>
                    <DepthBar color="#e9f9ee" style={{ width }} />
                    <SumText>{sum}</SumText>
                  </SumCell>
                </BookRow>
              ))}
            </RowList>
            <Balance>
              <BalanceText color={GREEN}>B 91.23%</BalanceText>
              <BalanceBuy />
              <BalanceSell />
              <BalanceText color={RED}>8.77% S</BalanceText>
            </Balance>
            <Grip />
            <Corner />
          </BookCard>
        </Main>
      </Page>
    </>
  );
}
